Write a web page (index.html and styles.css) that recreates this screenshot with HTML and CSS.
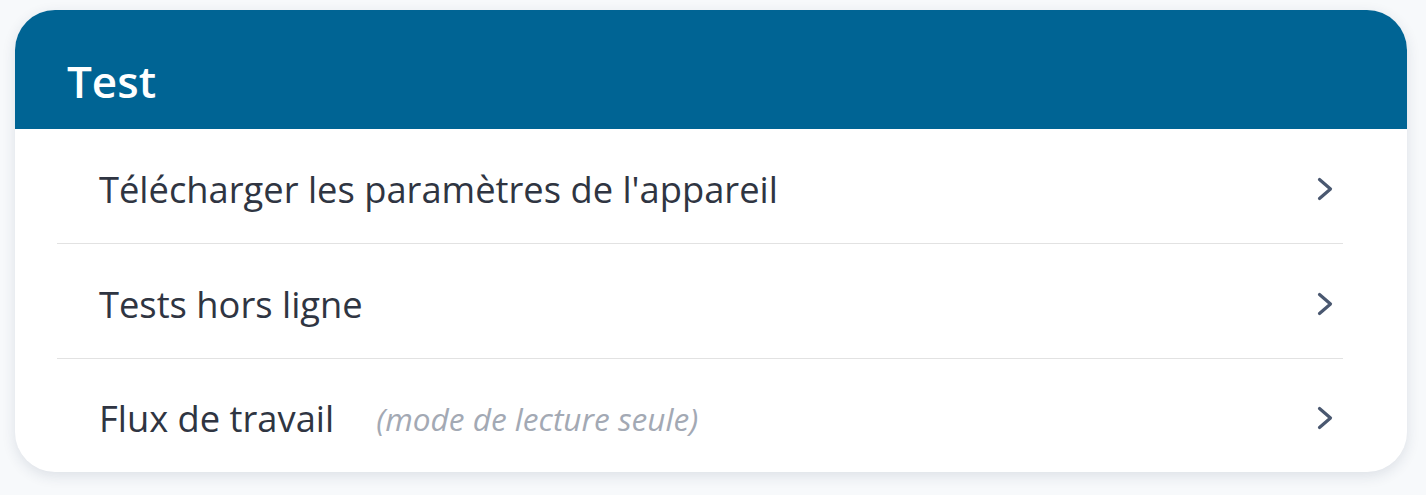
FILE: index.html
```html
<!DOCTYPE html>
<html lang="fr">

<head>
    <meta charset="UTF-8">
    <meta name="viewport" content="width=device-width, initial-scale=1.0">
    <title>Test</title>
    <link rel="stylesheet" href="styles.css">
</head>

<body>
    <div class="card">
        <header class="card_head">
            <h2>Test</h2>
        </header>

        <ul class="menu">
            <li class="menu_item">
                <span class="item_label">Télécharger les paramètres de l'appareil</span>
                <svg class="chevron" viewBox="0 0 16 24"><path d="M2.5 2.5 L13.5 12 L2.5 21.5"/></svg>
            </li>
            <li class="menu_item">
                <span class="item_label">Tests hors ligne</span>
                <svg class="chevron" viewBox="0 0 16 24"><path d="M2.5 2.5 L13.5 12 L2.5 21.5"/></svg>
            </li>
            <li class="menu_item">
                <span class="item_label">Flux de travail</span>
                <span class="item_note">(mode de lecture seule)</span>
                <svg class="chevron" viewBox="0 0 16 24"><path d="M2.5 2.5 L13.5 12 L2.5 21.5"/></svg>
            </li>
        </ul>
    </div>
</body>

</html>
```

FILE: styles.css
```css
* {
    margin: 0;
    padding: 0;
    box-sizing: border-box;
}

body {
    padding: 10px 19px 22px 15px;
    background: #f7f9fb;
    font-family: "Open Sans", "Noto Sans", sans-serif;
}

.card {
    background: #fff;
    border-radius: 40px;
    overflow: hidden;
    box-shadow: 0 4px 14px rgba(30, 50, 80, 0.12);
}

.card_head {
    height: 119px;
    padding: 23px 52px 0;
    display: flex;
    align-items: center;

    background: #006494;
}

.card_head h2 {
    color: #fff;
    font-size: 44px;
    font-weight: 600;
}

.menu {
    list-style: none;
    padding: 0 64px 0 42px;
}

.menu_item {
    height: 115px;
    padding: 5px 10px 0 42px;
    display: flex;
    align-items: center;

    border-bottom: 1px solid #e2e2e2;
}

.menu_item:last-child {
    height: 113px;
    border-bottom: none;
}

.item_label {
    color: #2f3542;
    font-size: 36.3px;
}

.item_note {
    margin-left: 42px;

    color: #a3a9b4;
    font-size: 31.6px;
    font-style: italic;
}

.chevron {
    width: 16px;
    height: 24px;
    margin-left: auto;

    fill: none;
    stroke: #4a5870;
    stroke-width: 3.2;
    stroke-linecap: round;
    stroke-linejoin: round;
}
```
